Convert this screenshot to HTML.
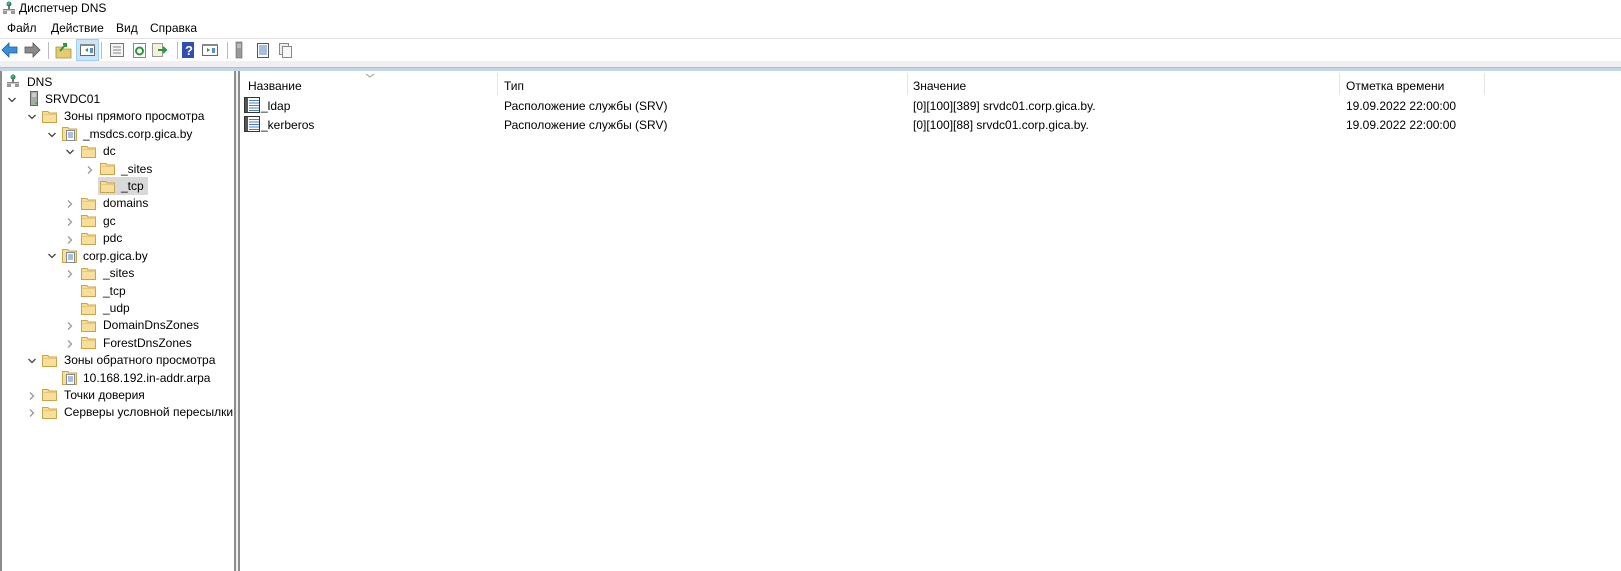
<!DOCTYPE html>
<html><head><meta charset="utf-8"><style>
*{margin:0;padding:0;box-sizing:border-box}
body{width:1621px;height:571px;overflow:hidden;background:#fff;font-family:"Liberation Sans","Noto Sans CJK SC",sans-serif;font-size:12px;color:#000;position:relative}
.a{position:absolute;white-space:nowrap}
</style></head><body>
<svg class="a" style="left:2px;top:1px" width="14" height="14" viewBox="0 0 14 14"><circle cx="7" cy="3" r="2.5" fill="#2a8a3a"/><circle cx="6.5" cy="2.5" r="1.2" fill="#5ab0e8"/><rect x="6" y="5" width="2" height="3" fill="#777"/><rect x="1" y="8" width="12" height="1.5" fill="#888"/><rect x="1" y="10" width="4" height="3" fill="#999"/><rect x="9" y="10" width="4" height="3" fill="#999"/></svg>
<div class="a" style="left:19px;top:1px">Диспетчер DNS</div>
<div class="a" style="left:7px;top:21px">Файл</div>
<div class="a" style="left:51px;top:21px">Действие</div>
<div class="a" style="left:116px;top:21px">Вид</div>
<div class="a" style="left:150px;top:21px">Справка</div>
<div class="a" style="left:0;top:38px;width:1621px;height:1px;background:#e3e3e3"></div>
<svg class="a" style="left:0;top:39px" width="300" height="22" viewBox="0 0 300 22">
<path d="M2 11 L9 4 V8 H17 V14 H9 V18 Z" fill="#3a8fd8" stroke="#1b5e9e" stroke-width="0.8"/>
<path d="M40 11 L33 4 V8 H25 V14 H33 V18 Z" fill="#8a8a8a" stroke="#555" stroke-width="0.8"/>
<rect x="48" y="3" width="1" height="17" fill="#bbb"/>
<path d="M56 8 H62 L63 10 H71 V19 H56 Z" fill="#e7c96f" stroke="#b0902e" stroke-width="0.8"/>
<path d="M60 12 L66 5 M63 5 H66 V8" stroke="#2a9a3a" stroke-width="2" fill="none"/>
<rect x="76.5" y="0.5" width="22" height="21" fill="#cce4f7" stroke="#99d1ff"/>
<rect x="80.5" y="5.5" width="14" height="11" fill="#fff" stroke="#666"/><rect x="80" y="5" width="15" height="2" fill="#888"/><path d="M88 9 L85 11 L88 13 Z" fill="#2a9a3a"/><rect x="90" y="9" width="3" height="5" fill="#5a8fc8"/>
<rect x="101" y="3" width="1" height="17" fill="#bbb"/>
<rect x="110.5" y="4.5" width="13" height="13" fill="#f4f4f4" stroke="#777"/><path d="M113 8H121M113 11H121M113 14H121" stroke="#888"/>
<rect x="133.5" y="4.5" width="12" height="14" fill="#fff" stroke="#888"/><circle cx="139.5" cy="12" r="3.5" fill="none" stroke="#2a9a3a" stroke-width="2"/>
<rect x="152.5" y="4.5" width="10" height="13" fill="#f6f0d8" stroke="#999"/><path d="M158 11 H166 M163 8 L166 11 L163 14" stroke="#2a9a3a" stroke-width="2" fill="none"/>
<rect x="177" y="3" width="1" height="17" fill="#bbb"/>
<rect x="182" y="3" width="12" height="16" fill="#2e4fb0"/><text x="185" y="16" font-size="13" font-weight="bold" fill="#fff" font-family="Liberation Sans">?</text>
<rect x="202.5" y="5.5" width="15" height="11" fill="#fff" stroke="#666"/><rect x="202" y="5" width="16" height="2" fill="#888"/><path d="M207 9 L210 11 L207 13 Z" fill="#2a9a3a"/><rect x="212" y="9" width="3" height="5" fill="#5a8fc8"/>
<rect x="227" y="3" width="1" height="17" fill="#bbb"/>
<rect x="236" y="3" width="6" height="16" fill="#999" stroke="#666" stroke-width="0.6"/><path d="M237 6H241M237 8H241" stroke="#ddd"/>
<rect x="257.5" y="4.5" width="11" height="14" fill="#fff" stroke="#555"/><path d="M259 7H267M259 9H267M259 11H267M259 13H267M259 15H267" stroke="#4a7fc0"/>
<rect x="279.5" y="4.5" width="9" height="11" fill="#eee" stroke="#888"/><rect x="282.5" y="7.5" width="9" height="11" fill="#f8f8f8" stroke="#888"/>
</svg>
<div class="a" style="left:0;top:61px;width:1621px;height:6px;background:#f0f0f0"></div>
<div class="a" style="left:0;top:67px;width:1621px;height:4px;background:#c3d5e9;border-top:1px solid #a9bdd4"></div>
<div class="a" style="left:0;top:71px;width:2px;height:500px;background:#8c8c8c"></div>
<div class="a" style="left:234px;top:71px;width:2px;height:500px;background:#8c8c8c"></div>
<div class="a" style="left:236px;top:71px;width:2px;height:500px;background:#f0f0f0"></div>
<div class="a" style="left:238px;top:71px;width:2px;height:500px;background:#8c8c8c"></div>
<svg class="a" style="left:6px;top:74px" width="14" height="15" viewBox="0 0 14 15"><circle cx="7" cy="3" r="2.5" fill="#2a8a3a"/><circle cx="6.5" cy="2.5" r="1.2" fill="#5ab0e8"/><rect x="6" y="5" width="2" height="3" fill="#777"/><rect x="1" y="8" width="12" height="1.5" fill="#888"/><rect x="1" y="10" width="4" height="3" fill="#999"/><rect x="9" y="10" width="4" height="3" fill="#999"/></svg>
<div class="a" style="left:27px;top:75px">DNS</div>
<svg class="a" style="left:30px;top:91px" width="8" height="15"><rect x="0.5" y="0.5" width="7" height="14" fill="#aaa" stroke="#666"/><path d="M2 3H6M2 5H6" stroke="#eee"/><rect x="5" y="11" width="2" height="2" fill="#3c3"/></svg>
<div class="a" style="left:45px;top:92px">SRVDC01</div>
<div class="a" style="left:98px;top:177px;width:50px;height:18px;background:#d9d9d9"></div>
<svg width="0" height="0" style="position:absolute">
<defs>
<symbol id="f" viewBox="0 0 15 13"><path d="M0.5 1.5 H6 L7 3 H14.5 V12.5 H0.5 Z" fill="#f7de9a" stroke="#c8a44a"/><path d="M0.5 4.5 H14.5" stroke="#e8c872"/></symbol>
<symbol id="z" viewBox="0 0 15 15"><path d="M0.5 1.5 H6 L7 3 H14.5 V14.5 H0.5 Z" fill="#f7de9a" stroke="#c8a44a"/><rect x="4.5" y="4.5" width="8" height="10" fill="#fff" stroke="#888"/><path d="M6 7H11M6 9H11M6 11H11" stroke="#4a7fc0"/></symbol>
<symbol id="d" viewBox="0 0 8 8"><path d="M0.5 2 L4 5.5 L7.5 2" fill="none" stroke="#444" stroke-width="1.3"/></symbol>
<symbol id="r" viewBox="0 0 8 8"><path d="M2 0.5 L5.5 4 L2 7.5" fill="none" stroke="#999" stroke-width="1.3"/></symbol>
<symbol id="rec" viewBox="0 0 16 16"><rect x="0.5" y="0.5" width="15" height="15" fill="#fff" stroke="#333"/><rect x="1" y="1" width="3" height="14" fill="#555"/><path d="M5 3.5H15M5 6H15M5 8.5H15M5 11H15M5 13.5H15" stroke="#4a7fc0"/></symbol>
</defs></svg>
<svg class="a" style="left:8px;top:96px" width="8" height="8"><use href="#d"/></svg>
<svg class="a" style="left:28px;top:113px" width="8" height="8"><use href="#d"/></svg>
<svg class="a" style="left:42px;top:110px" width="15" height="13"><use href="#f"/></svg>
<div class="a" style="left:64px;top:109px">Зоны прямого просмотра</div>
<svg class="a" style="left:48px;top:131px" width="8" height="8"><use href="#d"/></svg>
<svg class="a" style="left:62px;top:126px" width="15" height="15"><use href="#z"/></svg>
<div class="a" style="left:83px;top:127px">_msdcs.corp.gica.by</div>
<svg class="a" style="left:66px;top:148px" width="8" height="8"><use href="#d"/></svg>
<svg class="a" style="left:81px;top:145px" width="15" height="13"><use href="#f"/></svg>
<div class="a" style="left:103px;top:144px">dc</div>
<svg class="a" style="left:86px;top:166px" width="8" height="8"><use href="#r"/></svg>
<svg class="a" style="left:100px;top:162px" width="15" height="13"><use href="#f"/></svg>
<div class="a" style="left:121px;top:162px">_sites</div>
<svg class="a" style="left:100px;top:180px" width="15" height="13"><use href="#f"/></svg>
<div class="a" style="left:121px;top:179px">_tcp</div>
<svg class="a" style="left:66px;top:200px" width="8" height="8"><use href="#r"/></svg>
<svg class="a" style="left:81px;top:197px" width="15" height="13"><use href="#f"/></svg>
<div class="a" style="left:103px;top:196px">domains</div>
<svg class="a" style="left:66px;top:218px" width="8" height="8"><use href="#r"/></svg>
<svg class="a" style="left:81px;top:214px" width="15" height="13"><use href="#f"/></svg>
<div class="a" style="left:103px;top:214px">gc</div>
<svg class="a" style="left:66px;top:236px" width="8" height="8"><use href="#r"/></svg>
<svg class="a" style="left:81px;top:232px" width="15" height="13"><use href="#f"/></svg>
<div class="a" style="left:103px;top:231px">pdc</div>
<svg class="a" style="left:48px;top:252px" width="8" height="8"><use href="#d"/></svg>
<svg class="a" style="left:62px;top:248px" width="15" height="15"><use href="#z"/></svg>
<div class="a" style="left:83px;top:249px">corp.gica.by</div>
<svg class="a" style="left:66px;top:270px" width="8" height="8"><use href="#r"/></svg>
<svg class="a" style="left:81px;top:267px" width="15" height="13"><use href="#f"/></svg>
<div class="a" style="left:103px;top:266px">_sites</div>
<svg class="a" style="left:81px;top:284px" width="15" height="13"><use href="#f"/></svg>
<div class="a" style="left:103px;top:284px">_tcp</div>
<svg class="a" style="left:81px;top:302px" width="15" height="13"><use href="#f"/></svg>
<div class="a" style="left:103px;top:301px">_udp</div>
<svg class="a" style="left:66px;top:322px" width="8" height="8"><use href="#r"/></svg>
<svg class="a" style="left:81px;top:319px" width="15" height="13"><use href="#f"/></svg>
<div class="a" style="left:103px;top:318px">DomainDnsZones</div>
<svg class="a" style="left:66px;top:340px" width="8" height="8"><use href="#r"/></svg>
<svg class="a" style="left:81px;top:336px" width="15" height="13"><use href="#f"/></svg>
<div class="a" style="left:103px;top:336px">ForestDnsZones</div>
<svg class="a" style="left:28px;top:357px" width="8" height="8"><use href="#d"/></svg>
<svg class="a" style="left:42px;top:354px" width="15" height="13"><use href="#f"/></svg>
<div class="a" style="left:64px;top:353px">Зоны обратного просмотра</div>
<svg class="a" style="left:62px;top:370px" width="15" height="15"><use href="#z"/></svg>
<div class="a" style="left:83px;top:371px">10.168.192.in-addr.arpa</div>
<svg class="a" style="left:28px;top:392px" width="8" height="8"><use href="#r"/></svg>
<svg class="a" style="left:42px;top:388px" width="15" height="13"><use href="#f"/></svg>
<div class="a" style="left:64px;top:388px">Точки доверия</div>
<svg class="a" style="left:28px;top:409px" width="8" height="8"><use href="#r"/></svg>
<svg class="a" style="left:42px;top:406px" width="15" height="13"><use href="#f"/></svg>
<div class="a" style="left:64px;top:405px">Серверы условной пересылки</div>
<svg class="a" style="left:365px;top:73px" width="10" height="6"><path d="M1 1 L5 4 L9 1" fill="none" stroke="#999"/></svg>
<div class="a" style="left:248px;top:79px">Название</div>
<div class="a" style="left:497px;top:73px;width:1px;height:22px;background:#e5e5e5"></div>
<div class="a" style="left:504px;top:79px">Тип</div>
<div class="a" style="left:907px;top:73px;width:1px;height:22px;background:#e5e5e5"></div>
<div class="a" style="left:913px;top:79px">Значение</div>
<div class="a" style="left:1339px;top:73px;width:1px;height:22px;background:#e5e5e5"></div>
<div class="a" style="left:1346px;top:79px">Отметка времени</div>
<div class="a" style="left:1484px;top:73px;width:1px;height:22px;background:#e5e5e5"></div>
<svg class="a" style="left:244px;top:97px" width="16" height="16"><use href="#rec"/></svg>
<div class="a" style="left:261px;top:99px">_ldap</div>
<div class="a" style="left:504px;top:99px">Расположение службы (SRV)</div>
<div class="a" style="left:913px;top:99px">[0][100][389] srvdc01.corp.gica.by.</div>
<div class="a" style="left:1346px;top:99px">19.09.2022 22:00:00</div>
<svg class="a" style="left:244px;top:116px" width="16" height="16"><use href="#rec"/></svg>
<div class="a" style="left:261px;top:118px">_kerberos</div>
<div class="a" style="left:504px;top:118px">Расположение службы (SRV)</div>
<div class="a" style="left:913px;top:118px">[0][100][88] srvdc01.corp.gica.by.</div>
<div class="a" style="left:1346px;top:118px">19.09.2022 22:00:00</div>
</body></html>
